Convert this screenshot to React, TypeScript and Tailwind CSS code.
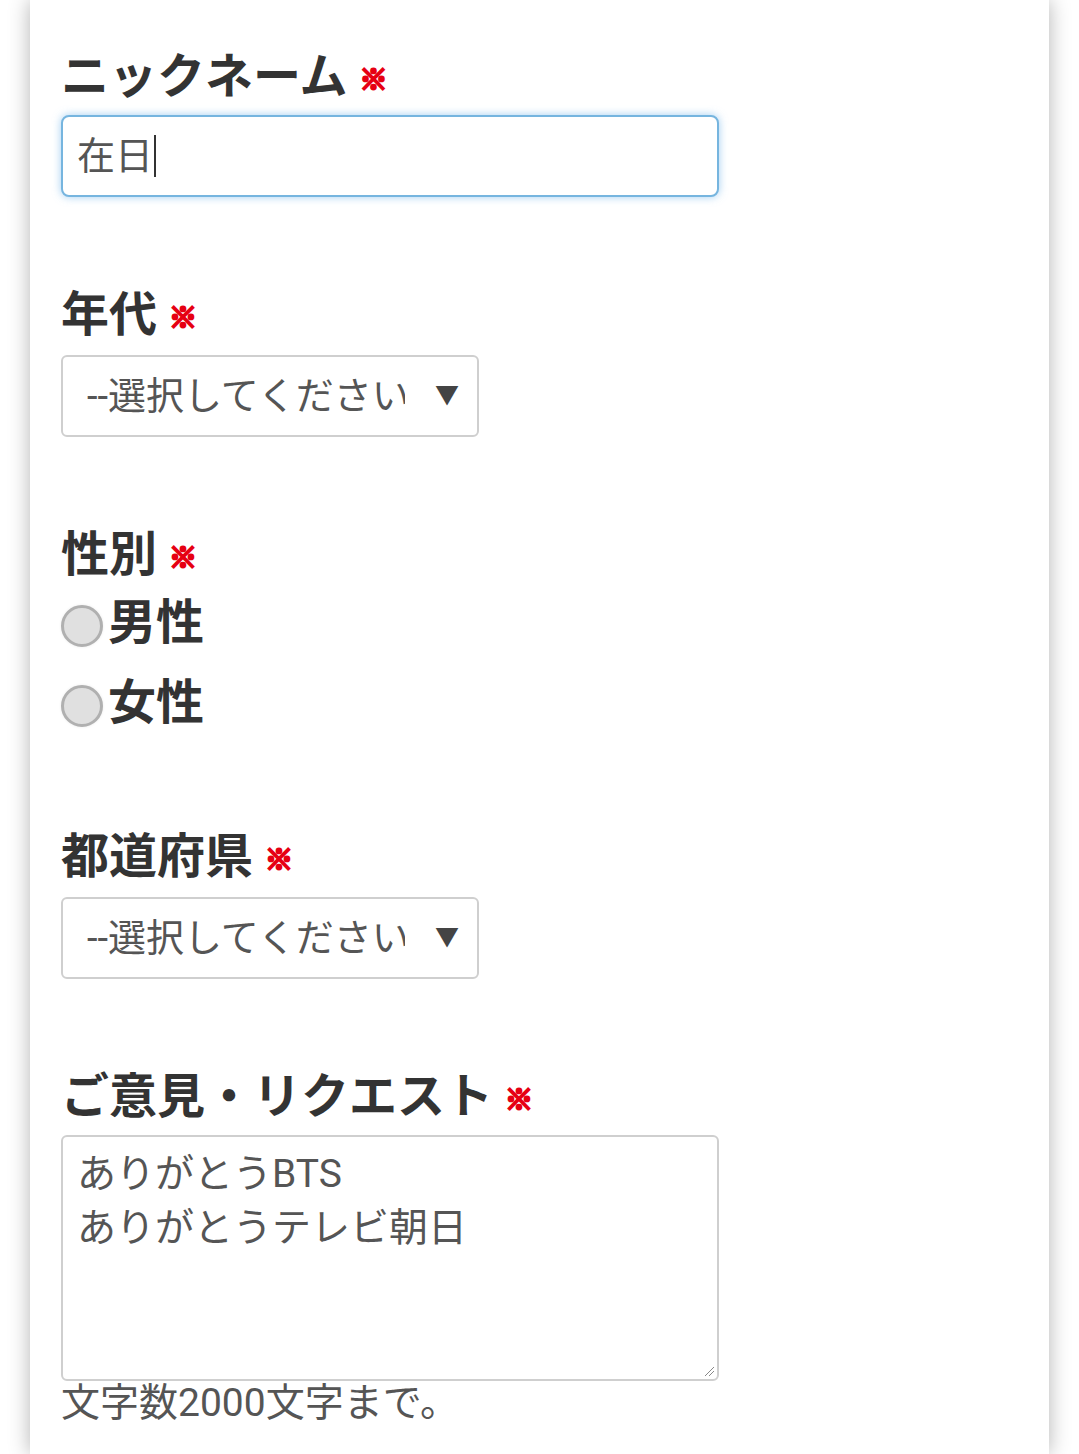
import React from "react";

const jp = { fontFamily: 'Roboto, "Noto Sans CJK JP", sans-serif' };
const jpBold = { fontFamily: '"Noto Sans CJK JP", sans-serif' };

function Req() {
  return (
    <span className="ml-[12px] inline-block text-[28px] font-bold leading-none text-[#e60012] translate-y-[6px] [-webkit-text-stroke:2.5px_#e60012]">※</span>
  );
}

function Label({ children }: { children: React.ReactNode }) {
  return (
    <div className="flex items-center text-[48px] font-bold leading-[56px] text-[#333]" style={jpBold}>
      <span>{children}</span>
      <Req />
    </div>
  );
}

function SelectBox() {
  return (
    <div className="mt-[17px] flex h-[82px] w-[418px] items-center rounded-[6px] border-2 border-[#cfcfcf] bg-white pl-[24px] pr-[18px]" style={jp}>
      <div className="w-[318px] overflow-hidden whitespace-nowrap text-[38px] text-[#555]">--選択してください</div>
      <div className="ml-auto text-[24px] text-[#444]">▼</div>
    </div>
  );
}

function Radio({ label }: { label: string }) {
  return (
    <div className="flex items-center h-[80px]">
      <div className="translate-y-[8px] h-[42px] w-[42px] rounded-full border-[3px] border-[#b0b0b0] bg-[#e0e0e0] shadow-[0_0_3px_rgba(0,0,0,0.08)]" />
      <span className="ml-[5px] text-[48px] font-bold text-[#333] leading-[56px]" style={jpBold}>{label}</span>
    </div>
  );
}

export default function App() {
  return (
    <div className="min-h-[1454px] w-[1079px] bg-white overflow-hidden">
      <div className="ml-[30px] w-[1019px] h-[1454px] bg-white shadow-[0_0_20px_rgba(0,0,0,0.3)] pl-[31px] pt-[44px]">
        <Label>ニックネーム</Label>
        <div className="mt-[15px] flex h-[82px] w-[658px] items-center rounded-[8px] border-2 border-[#76b5df] bg-white pl-[14px] shadow-[0_0_8px_rgba(102,175,233,0.6)]" style={jp}>
          <span className="text-[38px] text-[#555]">在日</span>
          <span className="ml-[1px] inline-block h-[42px] w-[2px] bg-[#333]" />
        </div>

        <div className="mt-[85px]">
          <Label>年代</Label>
          <SelectBox />
        </div>

        <div className="mt-[85px]">
          <Label>性別</Label>
          <div>
            <Radio label="男性" />
            <Radio label="女性" />
          </div>
        </div>

        <div className="mt-[86px]">
          <Label>都道府県</Label>
          <SelectBox />
        </div>

        <div className="mt-[85px]">
          <Label>ご意見・リクエスト</Label>
          <div className="relative mt-[15px] h-[246px] w-[658px] rounded-[6px] border-2 border-[#cfcfcf] bg-white px-[14px] pt-[10px] text-[39px] leading-[54px] text-[#555]" style={jp}>
            <div>ありがとうBTS</div>
            <div>ありがとうテレビ朝日</div>
            <svg className="absolute bottom-[2px] right-[2px]" width="12" height="12" viewBox="0 0 12 12">
              <line x1="2" y1="11" x2="11" y2="2" stroke="#888" strokeWidth="1" />
              <line x1="6" y1="11" x2="11" y2="6" stroke="#888" strokeWidth="1" />
            </svg>
          </div>
          <div className="text-[39px] leading-[44px] text-[#555]" style={jp}>文字数2000文字まで。</div>
        </div>
      </div>
    </div>
  );
}
